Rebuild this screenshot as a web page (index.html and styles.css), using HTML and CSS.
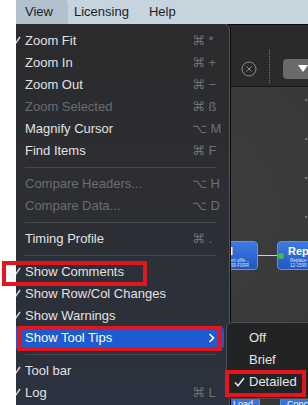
FILE: index.html
```html
<!DOCTYPE html>
<html>
<head>
<meta charset="utf-8">
<link rel="stylesheet" href="styles.css">
</head>
<body>
<div class="screen">
  <div class="gutter"></div>
  <div class="desktop">
    <div class="menubar">
      <span class="mb-item active">View</span>
      <span class="mb-item">Licensing</span>
      <span class="mb-item">Help</span>
    </div>
    <div class="workspace">
      <div class="appwin">
        <div class="toolbar">
          <svg class="clear-icon" width="16" height="16" viewBox="0 0 16 16"><circle cx="8" cy="8" r="7" fill="none" stroke="#8c8c8c" stroke-width="1"/><path d="M5.5 5.5 L10.5 10.5 M10.5 5.5 L5.5 10.5" stroke="#8c8c8c" stroke-width="1"/></svg>
          <span class="vsep"></span>
          <span class="dropbtn"><svg width="12" height="10" viewBox="0 0 12 10"><path d="M1 1 L11 1 L6 8 Z" fill="#fff"/></svg></span>
        </div>
        <div class="canvas">
          <span class="dot d1"></span><span class="dot d2"></span><span class="dot d3"></span><span class="dot d4"></span>
          <div class="node n1"><div class="n-title">Normal</div><div class="n-sub">Convert uffle...</div><div class="n-sub">12-1599 F0RR</div></div>
          <div class="link l1"></div>
          <span class="ok"></span>
          <div class="node n2"><div class="n-title">Replace</div><div class="n-sub">Replace multiple...</div><div class="n-sub">12-1599 9.1...</div></div>
          <div class="node n3"><div class="n-title">Load</div></div>
          <div class="node n4"><div class="n-title">Concat</div></div>
        </div>
      </div>

      <div class="menu">
        <div class="item checked"><svg class="tick" width="10" height="10" viewBox="0 0 10 10"><path d="M1 5.5 L3.8 8.5 L9 1" fill="none" stroke="#d8d8d8" stroke-width="1.5"/></svg><span class="label">Zoom Fit</span><span class="key">⌘ *</span></div>
        <div class="item"><span class="label">Zoom In</span><span class="key">⌘ +</span></div>
        <div class="item"><span class="label">Zoom Out</span><span class="key">⌘ −</span></div>
        <div class="item disabled"><span class="label">Zoom Selected</span><span class="key">⌘ ß</span></div>
        <div class="item"><span class="label">Magnify Cursor</span><span class="key">⌥ M</span></div>
        <div class="item"><span class="label">Find Items</span><span class="key">⌘ F</span></div>
        <div class="sep"></div>
        <div class="item disabled"><span class="label">Compare Headers...</span><span class="key">⌥ H</span></div>
        <div class="item disabled"><span class="label">Compare Data...</span><span class="key">⌥ D</span></div>
        <div class="sep"></div>
        <div class="item"><span class="label">Timing Profile</span><span class="key">⌘ .</span></div>
        <div class="sep"></div>
        <div class="item checked"><svg class="tick" width="10" height="10" viewBox="0 0 10 10"><path d="M1 5.5 L3.8 8.5 L9 1" fill="none" stroke="#d8d8d8" stroke-width="1.5"/></svg><span class="label">Show Comments</span><span class="key"></span></div>
        <div class="item checked"><svg class="tick" width="10" height="10" viewBox="0 0 10 10"><path d="M1 5.5 L3.8 8.5 L9 1" fill="none" stroke="#d8d8d8" stroke-width="1.5"/></svg><span class="label">Show Row/Col Changes</span><span class="key"></span></div>
        <div class="item checked"><svg class="tick" width="10" height="10" viewBox="0 0 10 10"><path d="M1 5.5 L3.8 8.5 L9 1" fill="none" stroke="#d8d8d8" stroke-width="1.5"/></svg><span class="label">Show Warnings</span><span class="key"></span></div>
        <div class="item selected"><span class="label">Show Tool Tips</span><span class="key chev"><svg width="7" height="10" viewBox="0 0 7 10"><path d="M1.5 1 L5.5 5 L1.5 9" fill="none" stroke="#fff" stroke-width="1.6"/></svg></span></div>
        <div class="sep"></div>
        <div class="item checked"><svg class="tick" width="10" height="10" viewBox="0 0 10 10"><path d="M1 5.5 L3.8 8.5 L9 1" fill="none" stroke="#d8d8d8" stroke-width="1.5"/></svg><span class="label">Tool bar</span><span class="key"></span></div>
        <div class="item checked"><svg class="tick" width="10" height="10" viewBox="0 0 10 10"><path d="M1 5.5 L3.8 8.5 L9 1" fill="none" stroke="#d8d8d8" stroke-width="1.5"/></svg><span class="label">Log</span><span class="key">⌘ L</span></div>
      </div>

      <div class="submenu">
        <div class="sub-item">Off</div>
        <div class="sub-item">Brief</div>
        <div class="sub-item checked"><svg class="sub-tick" width="11" height="10" viewBox="0 0 11 10"><path d="M1 5.5 L4 8.8 L10 1" fill="none" stroke="#e6e6e6" stroke-width="1.5"/></svg>Detailed</div>
      </div>
    </div>
  </div>
  <div class="mark mark-comments"></div>
  <div class="mark mark-tips"></div>
  <div class="mark mark-detailed"></div>
</div>
</body>
</html>
```

FILE: styles.css
```css
* { box-sizing: border-box; }
html, body { margin: 0; padding: 0; }
body {
  width: 308px;
  height: 405px;
  overflow: hidden;
  background: #fff;
  font-family: "Liberation Sans", "DejaVu Sans", Arial, sans-serif;
  font-size: 13px;
}
.screen {
  position: relative;
  display: flex;
  width: 308px;
  height: 405px;
  overflow: hidden;
}
.gutter {
  width: 16px;
  flex: none;
  background: #fff;
}
.desktop {
  flex: 1;
  display: flex;
  flex-direction: column;
  min-width: 0;
}
.menubar {
  height: 24px;
  flex: none;
  display: flex;
  align-items: center;
  background: #c6d4de;
  color: #1e1e1e;
}
.mb-item {
  height: 24px;
  line-height: 24px;
  padding: 0 10px;
}
.mb-item.active {
  background: #b2c2cd;
  padding: 0 15px 0 9px;
  border-radius: 0 4px 0 0;
}
.mb-item.active + .mb-item { padding-left: 6px; }

.workspace {
  position: relative;
  flex: 1;
  overflow: hidden;
}
.appwin {
  height: 100%;
  display: flex;
  flex-direction: column;
  border-top: 1px solid #0c0c0c;
}
.toolbar {
  height: 62px;
  flex: none;
  display: flex;
  align-items: center;
  padding: 34px 0 8px 225px;
  background: #2a2a2a;
  border-bottom: 1px solid #161616;
  overflow: hidden;
}
.clear-icon { flex: none; }
.vsep {
  flex: none;
  width: 0;
  height: 33px;
  margin: -9px 0 0 12px;
  align-self: flex-start;
  border-left: 1px dotted #777;
}
.dropbtn {
  flex: none;
  width: 32px;
  height: 20px;
  margin-left: 13px;
  border-radius: 4px;
  background: #6a6a6a;
  display: flex;
  align-items: center;
  padding-left: 14px;
}
.canvas {
  position: relative;
  flex: 1;
  background: radial-gradient(ellipse at 60% 40%, #3e3e3e 0%, #383838 70%, #333 100%);
}
.dot {
  position: absolute;
  left: 289px;
  width: 2px;
  height: 2px;
  background: #7a7a7a;
}
.d1 { top: 12px; }
.d2 { top: 51px; }
.d3 { top: 90px; }
.d4 { top: 129px; }
.node {
  position: absolute;
  background: linear-gradient(#3b7be2, #2356c0);
  border: 1px solid #5f93ea;
  border-radius: 4px;
  color: #fff;
  padding: 3px 6px;
  overflow: hidden;
  white-space: nowrap;
}
.n-title { font-size: 11px; font-weight: bold; line-height: 13px; }
.n-sub { font-size: 4.5px; line-height: 5px; color: #dce8ff; }
.n1 { left: 164px; top: 154px; width: 78px; height: 29px; text-align: right; padding-right: 24px; }
.n1 .n-sub { margin-right: -16px; }
.n2 { left: 261px; top: 154px; width: 60px; height: 29px; padding-left: 10px; }
.n2 .n-sub { padding-left: 2px; }
.n3 { left: 186px; top: 310px; width: 58px; height: 20px; text-align: right; padding-top: 0; }
.n4 { left: 264px; top: 310px; width: 50px; height: 20px; padding-top: 0; }
.n3 .n-title, .n4 .n-title { font-weight: normal; font-size: 9px; }
.link {
  position: absolute;
  left: 242px;
  top: 168px;
  width: 19px;
  height: 1px;
  background: #d0d0d0;
}
.ok {
  position: absolute;
  left: 262px;
  top: 166px;
  width: 6px;
  height: 6px;
  border-radius: 50%;
  background: #3bc23b;
  z-index: 2;
}

.menu {
  position: absolute;
  left: 0;
  top: -1px;
  width: 214px;
  height: 400px;
  padding-top: 6px;
  background: linear-gradient(to bottom, #2b2b2d 0%, #2c2e33 45%, #2b3240 100%);
  border: 1px solid #515357;
  border-left: none;
  border-radius: 0 7px 0 0;
  box-shadow: 1px 0 0 #080808, 0 -1px 0 #0c0c0c;
  overflow: hidden;
  color: #e2e2e2;
  z-index: 3;
}
.item {
  position: relative;
  height: 22px;
  line-height: 22px;
  display: grid;
  grid-template-columns: 1fr 24px;
  padding: 0 8px 0 9px;
  margin-right: 5px;
  white-space: nowrap;
}
.item.disabled { color: #6c6c6e; }
.key { color: #707074; }
.tick {
  position: absolute;
  left: -5px;
  top: 6px;
}
.item.selected {
  background: #1d5bd0;
  color: #fff;
  border-radius: 0 4px 4px 0;
}
.chev {
  display: flex;
  align-items: center;
  justify-content: flex-end;
  padding-right: 1px;
}
.sep {
  height: 11px;
  margin: 0 13px 0 9px;
  display: flex;
  align-items: center;
}
.sep::before {
  content: "";
  flex: 1;
  height: 1px;
  background: #47494d;
}

.submenu {
  position: absolute;
  left: 210px;
  top: 298px;
  width: 100px;
  padding: 4px 0 5px;
  background: #222325;
  border: 1px solid #4c4d50;
  border-radius: 6px 0 0 6px;
  color: #e6e6e6;
  z-index: 4;
}
.sub-item {
  position: relative;
  height: 22px;
  line-height: 22px;
  padding-left: 22px;
}
.sub-tick {
  position: absolute;
  left: 7px;
  top: 6px;
}

.mark {
  position: absolute;
  border: 4px solid #e4161d;
  z-index: 10;
}
.mark-comments { left: 2px; top: 261px; width: 145px; height: 25px; }
.mark-tips { left: 17px; top: 326px; width: 205px; height: 25px; }
.mark-detailed { left: 225px; top: 370px; width: 81px; height: 27px; }
```
